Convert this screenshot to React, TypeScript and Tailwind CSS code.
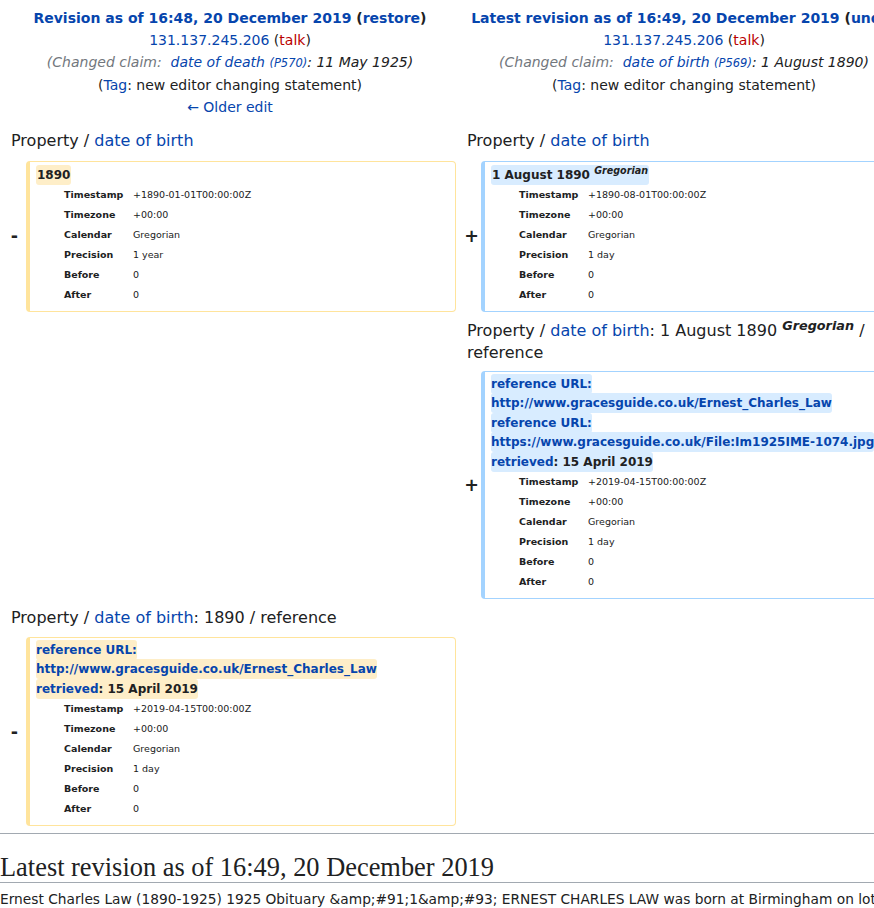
import React from "react";

type Row = [string, string];

const dobRows = (stamp: string, precision: string): Row[] => [
  ["Timestamp", stamp],
  ["Timezone", "+00:00"],
  ["Calendar", "Gregorian"],
  ["Precision", precision],
  ["Before", "0"],
  ["After", "0"],
];

function Card({ add, rows, children }: { add?: boolean; rows: Row[]; children: React.ReactNode }) {
  return (
    <div
      className={
        add
          ? "w-[430px] shrink-0 rounded-[4px] border border-l-4 border-[#a3d3ff] pt-[3px] pb-[6px] pl-[6px] pr-[6px]"
          : "w-[430px] shrink-0 rounded-[4px] border border-l-4 border-[#ffe49c] pt-[3px] pb-[6px] pl-[6px] pr-[6px]"
      }
    >
      <div className="text-[12px] leading-[20px] font-bold">{children}</div>
      <div className="ml-[28px] grid grid-cols-[69px_1fr] text-[9.5px] leading-[20px]">
        {rows.map(([k, v]) => (
          <React.Fragment key={k}>
            <div className="font-bold">{k}</div>
            <div>{v}</div>
          </React.Fragment>
        ))}
      </div>
    </div>
  );
}

function Marker({ right, children }: { right?: boolean; children: React.ReactNode }) {
  return (
    <div
      className={
        right
          ? "w-[25px] shrink-0 flex items-center justify-end pr-[2px] text-[17.5px] font-bold"
          : "w-[26px] shrink-0 flex items-center justify-end pr-[8px] text-[17.5px] font-bold"
      }
    >
      {children}
    </div>
  );
}

function Snak({ add, children }: { add?: boolean; children: React.ReactNode }) {
  return (
    <div className="leading-[19.4px]">
      <span
        className={
          add
            ? "bg-[#d8ecff] rounded-[3px] py-[3px] box-decoration-clone"
            : "bg-[#feeec8] rounded-[3px] py-[3px] box-decoration-clone"
        }
      >
        {children}
      </span>
    </div>
  );
}

const Dob = () => <span className="text-[#0645ad]">date of birth</span>;

export default function App() {
  return (
    <div className="w-full min-h-screen overflow-hidden bg-white text-[#202122] font-['DejaVu_Sans',sans-serif]">
      <div className="w-[914px]">
        {/* revision headers */}
        <div className="flex pt-[7px] text-[14px] leading-[22px]">
          <div className="w-[460px] shrink-0 text-center">
            <div className="font-bold">
              <span className="text-[#0645ad]">Revision as of 16:48, 20 December 2019</span> (
              <span className="text-[#0645ad]">restore</span>)
            </div>
            <div>
              <span className="text-[#0645ad]">131.137.245.206</span> (<span className="text-[#ba0000]">talk</span>)
            </div>
            <div className="italic">
              <span className="text-[#72777d]">(Changed claim: {"\u00a0"}</span>
              <span className="text-[#0645ad]">
                date of death <span className="text-[11.5px]">(P570)</span>
              </span>
              : 11 May 1925)
            </div>
            <div>
              (<span className="text-[#0645ad]">Tag</span>: new editor changing statement)
            </div>
            <div className="text-[#0645ad]">← Older edit</div>
          </div>
          <div className="w-[448px] shrink-0 text-center">
            <div className="font-bold whitespace-nowrap">
              <span className="text-[#0645ad]">Latest revision as of 16:49, 20 December 2019</span> (
              <span className="text-[#0645ad]">undo</span>)
            </div>
            <div>
              <span className="text-[#0645ad]">131.137.245.206</span> (<span className="text-[#ba0000]">talk</span>)
            </div>
            <div className="italic">
              <span className="text-[#72777d]">(Changed claim: {"\u00a0"}</span>
              <span className="text-[#0645ad]">
                date of birth <span className="text-[11.5px]">(P569)</span>
              </span>
              : 1 August 1890)
            </div>
            <div>
              (<span className="text-[#0645ad]">Tag</span>: new editor changing statement)
            </div>
          </div>
        </div>

        {/* main statement */}
        <div className="flex mt-[12px] text-[16px] leading-[22px]">
          <div className="w-[456px] shrink-0 pl-[11px]">
            Property / <Dob />
          </div>
          <div className="w-[455px] shrink-0 pl-[11px]">
            Property / <Dob />
          </div>
        </div>
        <div className="flex mt-[9px]">
          <Marker>-</Marker>
          <Card rows={dobRows("+1890-01-01T00:00:00Z", "1 year")}>
            <span className="inline-block leading-[20px] bg-[#feeec8] rounded-[3px] px-[1px]">1890</span>
          </Card>
          <Marker right>+</Marker>
          <Card add rows={dobRows("+1890-08-01T00:00:00Z", "1 day")}>
            <span className="inline-block leading-[20px] bg-[#d8ecff] rounded-[3px] px-[1px]">
              1 August 1890 <sup className="text-[0.8em] italic font-bold">Gregorian</sup>
            </span>
          </Card>
        </div>

        {/* added reference */}
        <div className="flex mt-[8px] text-[16px] leading-[22px]">
          <div className="w-[456px] shrink-0" />
          <div className="w-[455px] shrink-0 pl-[11px]">
            Property / <Dob />: 1 August 1890 <sup className="text-[0.8em] italic font-bold">Gregorian</sup> / reference
          </div>
        </div>
        <div className="flex mt-[7px]">
          <div className="w-[456px] shrink-0" />
          <Marker right>+</Marker>
          <Card add rows={dobRows("+2019-04-15T00:00:00Z", "1 day")}>
            <Snak add>
              <span className="text-[#0645ad]">reference URL: </span>
              <span className="text-[#0645ad] whitespace-nowrap">http://www.gracesguide.co.uk/Ernest_Charles_Law</span>
            </Snak>
            <Snak add>
              <span className="text-[#0645ad]">reference URL: </span>
              <span className="text-[#0645ad] whitespace-nowrap">https://www.gracesguide.co.uk/File:Im1925IME-1074.jpg</span>
            </Snak>
            <Snak add>
              <span className="text-[#0645ad]">retrieved</span>: 15 April 2019
            </Snak>
          </Card>
        </div>

        {/* removed reference */}
        <div className="flex mt-[8px] text-[16px] leading-[22px]">
          <div className="w-[456px] shrink-0 pl-[11px]">
            Property / <Dob />: 1890 / reference
          </div>
        </div>
        <div className="flex mt-[8px]">
          <Marker>-</Marker>
          <Card rows={dobRows("+2019-04-15T00:00:00Z", "1 day")}>
            <Snak>
              <span className="text-[#0645ad]">reference URL: </span>
              <span className="text-[#0645ad] whitespace-nowrap">http://www.gracesguide.co.uk/Ernest_Charles_Law</span>
            </Snak>
            <Snak>
              <span className="text-[#0645ad]">retrieved</span>: 15 April 2019
            </Snak>
          </Card>
        </div>
      </div>

      <div className="mt-[7px] border-t border-[#a2a9b1]" />
      <h2 className="mt-[18px] border-b border-[#a2a9b1] font-['Liberation_Serif',serif] text-[26.4px] leading-[30px] whitespace-nowrap">
        Latest revision as of 16:49, 20 December 2019
      </h2>
      <div className="mt-[6px] text-[13.75px] leading-[20px] whitespace-nowrap">
        {"Ernest Charles Law (1890-1925) 1925 Obituary &amp;#91;1&amp;#93; ERNEST CHARLES LAW was born at Birmingham on loth August 1890, and was educated at"}
      </div>
    </div>
  );
}
